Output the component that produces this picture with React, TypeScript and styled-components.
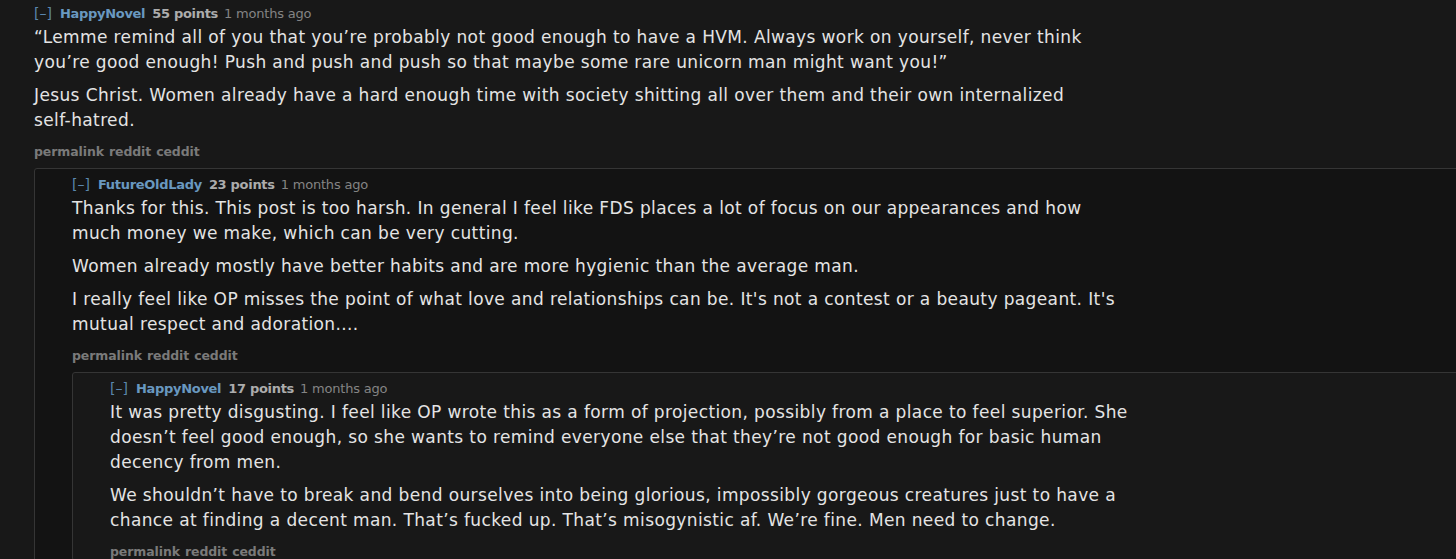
import React from 'react'
import styled, { createGlobalStyle } from 'styled-components'

const GlobalStyle = createGlobalStyle`
  html, body {
    margin: 0;
    padding: 0;
    background: #181818;
    overflow: hidden;
  }
  body {
    font-family: "DejaVu Sans", Verdana, sans-serif;
  }
`

const Page = styled.div`
  padding: 5px 0 0 34px;
  width: 1456px;
  box-sizing: border-box;
`

const CommentBox = styled.div<{ $nested: boolean; $dark: boolean }>`
  background: ${p => (p.$dark ? '#131313' : '#181818')};
  ${p => p.$nested && `
    margin-top: 8px;
    margin-right: -40px;
    border: 1px solid #353535;
    border-radius: 3px;
    padding: 7px 0 0 37px;
  `}
`

const Header = styled.div`
  display: flex;
  align-items: baseline;
  height: 16px;
  font-size: 13px;
  line-height: 16px;
  margin-bottom: 4px;
`

const Toggle = styled.span`
  color: #5a86ad;
  font-size: 14px;
  line-height: 16px;
  margin-right: 8px;
`

const Author = styled.span`
  color: #6998c0;
  font-weight: 700;
  letter-spacing: -0.3px;
  margin-right: 7px;
`

const Points = styled.span`
  color: #acacac;
  font-weight: 700;
  letter-spacing: -0.3px;
  margin-right: 6px;
`

const Time = styled.span`
  color: #848484;
  letter-spacing: -0.2px;
`

const Body = styled.div`
  max-width: 1058px;
`

const Para = styled.p`
  margin: 0 0 8px;
  color: #e4e4e4;
  font-size: 17px;
  letter-spacing: 0.38px;
  line-height: 25px;
`

const Links = styled.div`
  display: flex;
  gap: 5px;
  padding-top: 3px;
  font-size: 12.5px;
  letter-spacing: -0.1px;
  line-height: 16px;
  font-weight: 700;
  color: #7a7a7a;
`

interface CommentData {
  author: string
  points: number
  paragraphs: string[]
  reply?: CommentData
}

const thread: CommentData = {
  author: 'HappyNovel',
  points: 55,
  paragraphs: [
    '“Lemme remind all of you that you’re probably not good enough to have a HVM. Always work on yourself, never think you’re good enough! Push and push and push so that maybe some rare unicorn man might want you!”',
    'Jesus Christ. Women already have a hard enough time with society shitting all over them and their own internalized self-hatred.'
  ],
  reply: {
    author: 'FutureOldLady',
    points: 23,
    paragraphs: [
      'Thanks for this. This post is too harsh. In general I feel like FDS places a lot of focus on our appearances and how much money we make, which can be very cutting.',
      'Women already mostly have better habits and are more hygienic than the average man.',
      "I really feel like OP misses the point of what love and relationships can be. It's not a contest or a beauty pageant. It's mutual respect and adoration...."
    ],
    reply: {
      author: 'HappyNovel',
      points: 17,
      paragraphs: [
        'It was pretty disgusting. I feel like OP wrote this as a form of projection, possibly from a place to feel superior. She doesn’t feel good enough, so she wants to remind everyone else that they’re not good enough for basic human decency from men.',
        'We shouldn’t have to break and bend ourselves into being glorious, impossibly gorgeous creatures just to have a chance at finding a decent man. That’s fucked up. That’s misogynistic af. We’re fine. Men need to change.'
      ]
    }
  }
}

const Comment = ({ data, depth }: { data: CommentData; depth: number }): JSX.Element => (
  <CommentBox $nested={depth > 0} $dark={depth % 2 === 1}>
    <Header>
      <Toggle>[–]</Toggle>
      <Author>{data.author}</Author>
      <Points>{data.points} points</Points>
      <Time>1 months ago</Time>
    </Header>
    <Body>
      {data.paragraphs.map((text, i) => (
        <Para key={i}>{text}</Para>
      ))}
    </Body>
    <Links>
      <span>permalink</span>
      <span>reddit</span>
      <span>ceddit</span>
    </Links>
    {data.reply && <Comment data={data.reply} depth={depth + 1} />}
  </CommentBox>
)

export default function App(): JSX.Element {
  return (
    <>
      <GlobalStyle />
      <Page>
        <Comment data={thread} depth={0} />
      </Page>
    </>
  )
}
